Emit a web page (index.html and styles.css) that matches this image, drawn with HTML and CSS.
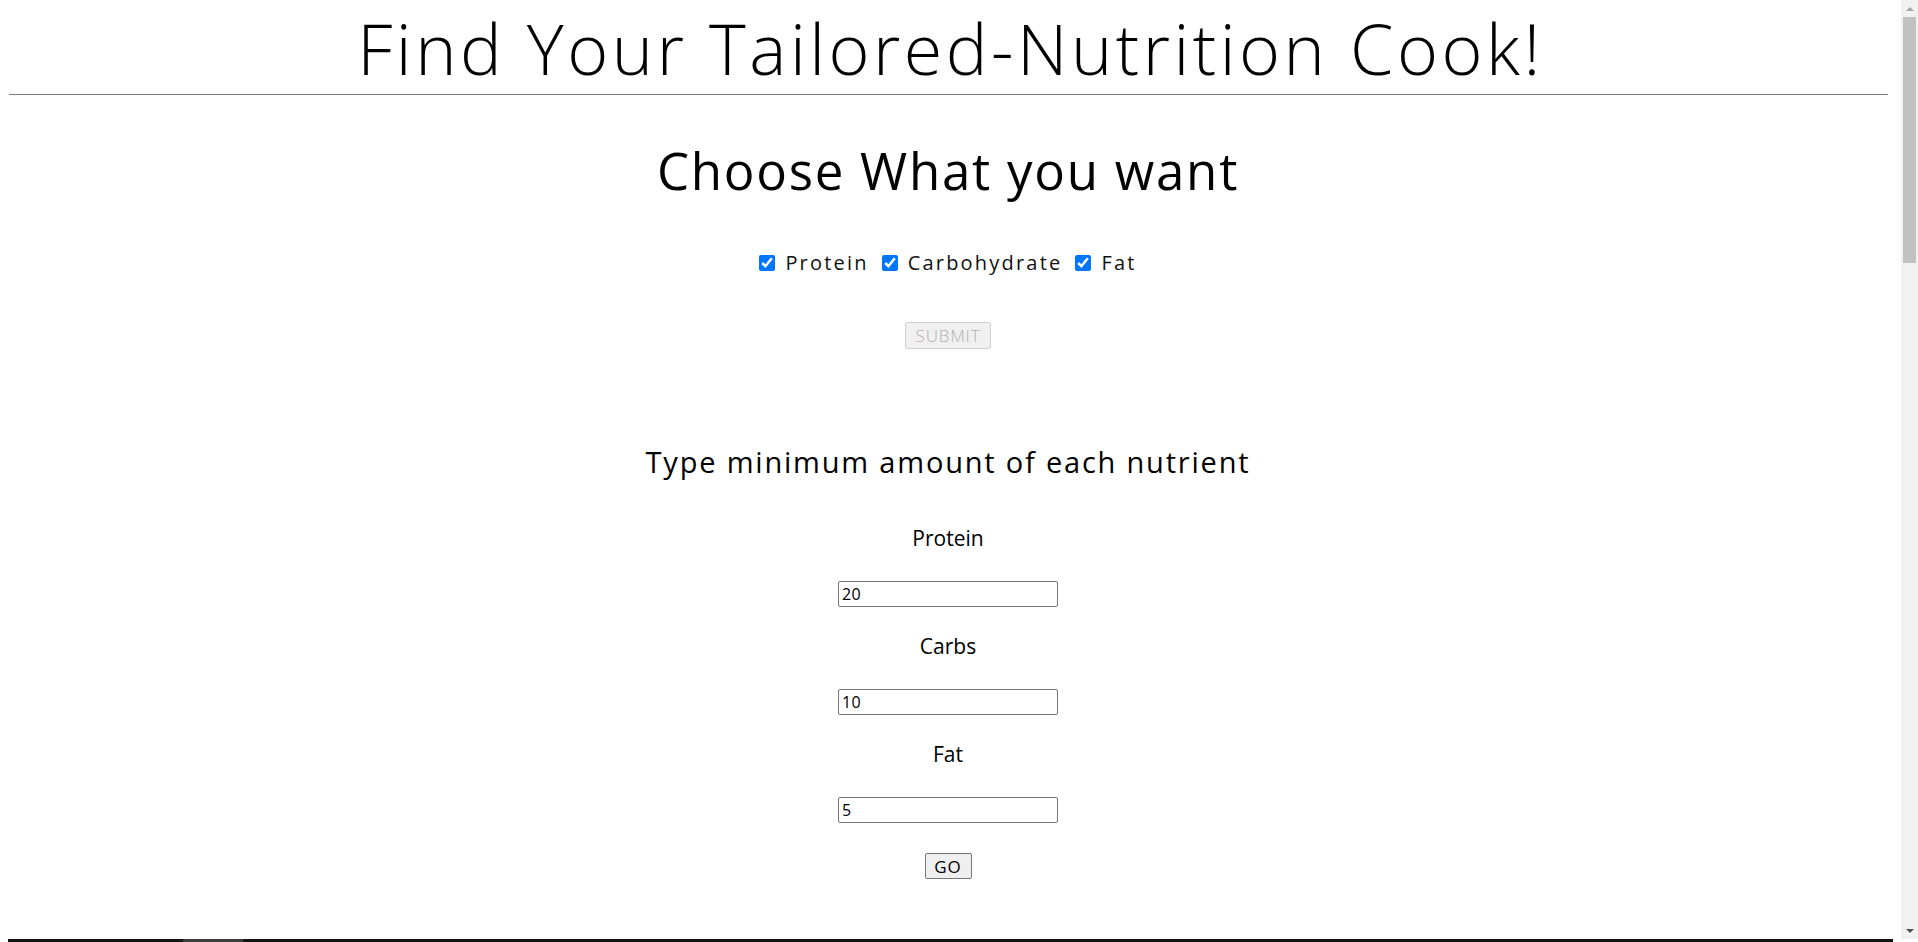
FILE: index.html
```html
<!DOCTYPE html>
<html lang="en">
<head>
<meta charset="utf-8">
<title>Find Your Tailored-Nutrition Cook!</title>
<link rel="stylesheet" href="styles.css">
</head>
<body>
<header class="masthead">
  <h1 class="title">Find Your Tailored-Nutrition Cook!</h1>
  <hr class="rule">
</header>
<main class="page">
  <section class="choose">
    <h2 class="choose-title">Choose What you want</h2>
    <div class="options">
      <label class="option"><input class="option-box" type="checkbox" checked><span class="option-text">Protein</span></label>
      <label class="option"><input class="option-box" type="checkbox" checked><span class="option-text">Carbohydrate</span></label>
      <label class="option"><input class="option-box" type="checkbox" checked><span class="option-text">Fat</span></label>
    </div>
    <button class="submit" type="button" disabled>SUBMIT</button>
  </section>
  <section class="amounts">
    <h3 class="amounts-title">Type minimum amount of each nutrient</h3>
    <div class="field">
      <p class="field-label">Protein</p>
      <input class="field-input" type="text" value="20">
    </div>
    <div class="field">
      <p class="field-label">Carbs</p>
      <input class="field-input" type="text" value="10">
    </div>
    <div class="field">
      <p class="field-label">Fat</p>
      <input class="field-input" type="text" value="5">
    </div>
    <button class="go" type="button">GO</button>
  </section>
</main>
<section class="results">
  <div class="results-tab"></div>
</section>
<div class="scrollbar" aria-hidden="true">
  <div class="scroll-arrow scroll-up"></div>
  <div class="scroll-track">
    <div class="scroll-thumb"></div>
  </div>
  <div class="scroll-arrow scroll-down"></div>
</div>
</body>
</html>
```

FILE: styles.css
```css
html, body {
  margin: 0;
  padding: 0;
}

body {
  margin: 8px 25px 8px 8px;
  font-family: "Open Sans", "Noto Sans", sans-serif;
  color: #000;
  background: #fff;
}

.masthead {
  text-align: center;
}

.title {
  margin: 0;
  font-size: 70px;
  font-weight: 300;
  line-height: 80px;
  letter-spacing: 3.5px;
}

.rule {
  margin: 6px 5px 0 1px;
  border: 0;
  border-top: 1px solid #7d7d7d;
  height: 0;
}

.page {
  margin-right: 5px;
  text-align: center;
}

.choose-title {
  margin: 44px 0 0;
  font-size: 51px;
  font-weight: 400;
  line-height: 62px;
  letter-spacing: 1.75px;
}

.options {
  display: flex;
  justify-content: center;
  gap: 13px;
  margin-top: 50px;
  font-size: 20px;
  font-weight: 400;
  line-height: 24px;
  letter-spacing: 2.2px;
  color: #111;
}

.option {
  display: inline-flex;
  align-items: center;
  gap: 10px;
}

.option-box {
  width: 16px;
  height: 16px;
  margin: 0;
  accent-color: #0075ff;
}

.submit {
  display: block;
  margin: 47px auto 0;
  width: 86px;
  height: 27px;
  padding: 0;
  font-family: inherit;
  font-size: 17px;
  font-weight: 300;
  letter-spacing: 0.8px;
  color: #b0b0b0;
  background: #f0f0f0;
  border: 1px solid #d0d0d0;
  border-radius: 2px;
}

.amounts-title {
  margin: 95px 0 0;
  font-size: 29px;
  font-weight: 400;
  line-height: 36px;
  letter-spacing: 1.8px;
}

.field {
  display: flex;
  flex-direction: column;
  align-items: center;
  margin-top: 26px;
}

.field:first-of-type {
  margin-top: 45px;
}

.field-label {
  margin: 0 0 30px;
  font-size: 21px;
  font-weight: 400;
  line-height: 26px;
}

.field-input {
  box-sizing: border-box;
  width: 220px;
  height: 26px;
  margin: 0;
  padding: 0 3px;
  font-family: inherit;
  font-size: 16px;
  letter-spacing: 0.4px;
  color: #000;
  background: #fff;
  border: 1px solid #767676;
  border-radius: 2px;
}

.go {
  display: block;
  margin: 30px auto 0;
  width: 47px;
  height: 26px;
  padding: 0;
  font-family: inherit;
  font-size: 17px;
  letter-spacing: 1px;
  color: #000;
  background: #efefef;
  border: 1px solid #767676;
  border-radius: 2px;
}

.results {
  margin: 60px -25px -8px -8px;
  height: 2540px;
  background: #141414;
  padding-left: 183px;
}

.results-tab {
  width: 60px;
  height: 4px;
  background: #3c3c3c;
}

/* window scrollbar chrome */
.scrollbar {
  position: fixed;
  top: 0;
  right: 0;
  bottom: 3px;
  width: 17px;
  display: flex;
  flex-direction: column;
  background: #f1f1f1;
  z-index: 10;
}

.scroll-arrow {
  height: 17px;
  flex: none;
  display: flex;
  align-items: center;
  justify-content: center;
}

.scroll-up::before {
  content: "";
  border-left: 4px solid transparent;
  border-right: 4px solid transparent;
  border-bottom: 4px solid #a3a3a3;
}

.scroll-down::before {
  content: "";
  border-left: 4px solid transparent;
  border-right: 4px solid transparent;
  border-top: 4px solid #505050;
}

.scroll-track {
  flex: 1;
  padding: 0 2px;
}

.scroll-thumb {
  height: 246px;
  background: #c1c1c1;
}
```
